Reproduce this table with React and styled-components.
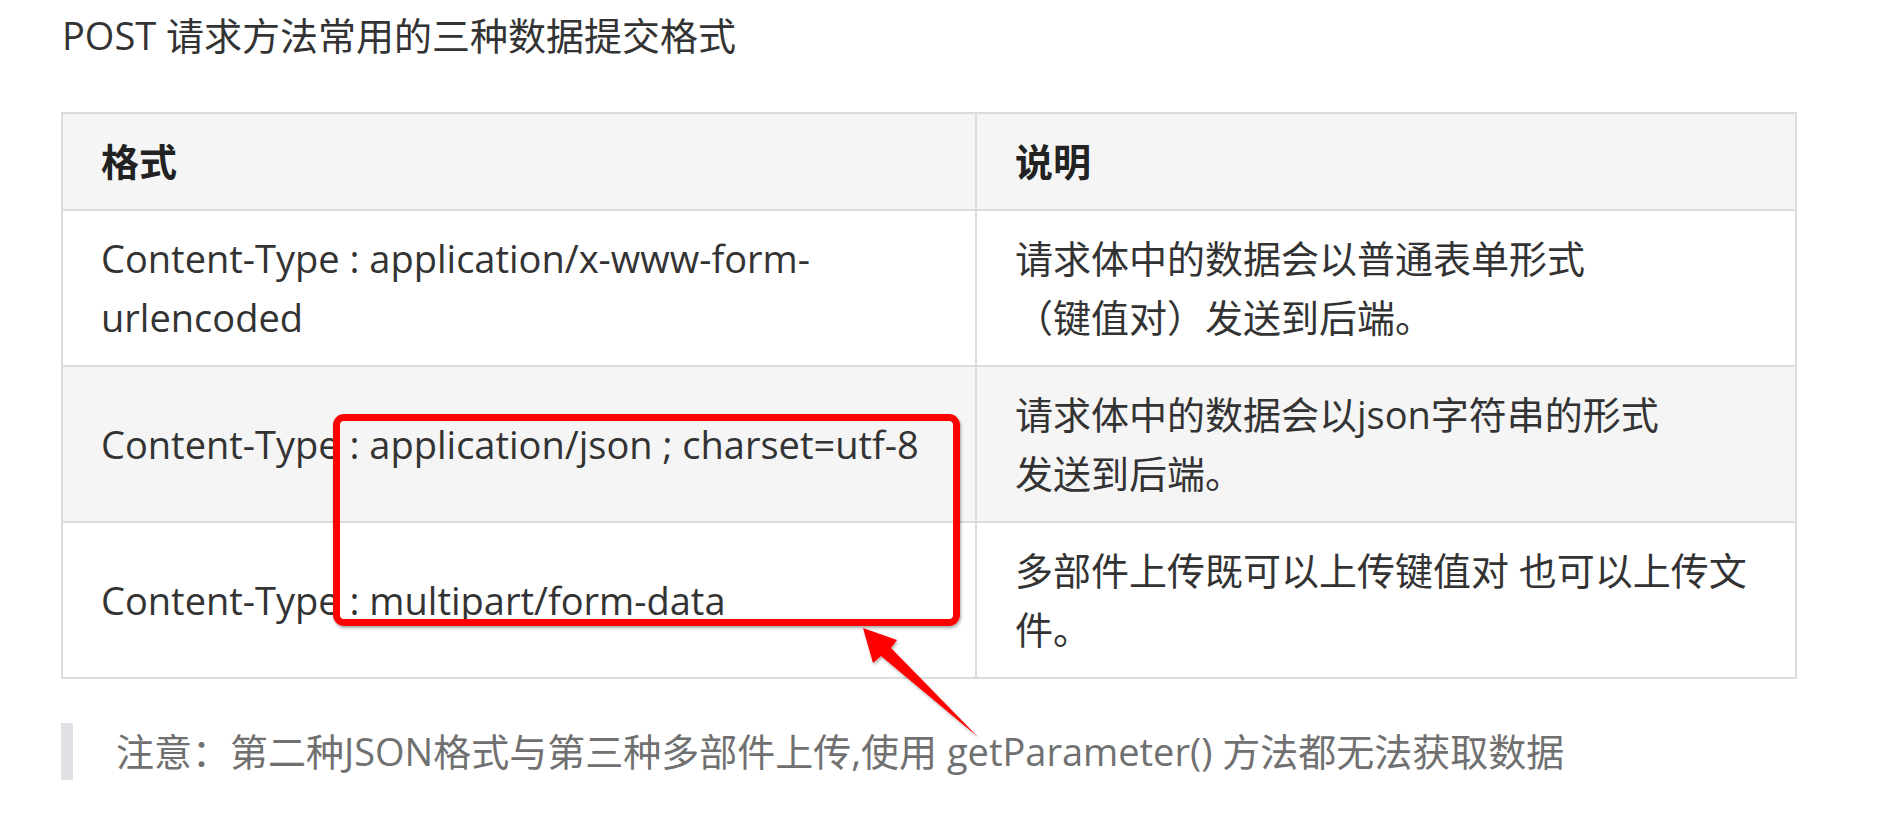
import React from "react";
import styled, { createGlobalStyle } from "styled-components";

const GlobalStyle = createGlobalStyle`
  html, body {
    margin: 0;
    padding: 0;
    background: #ffffff;
  }
  body {
    font-family: "Open Sans", "Noto Sans CJK SC", sans-serif;
    color: #333333;
  }
`;

const Page = styled.div`
  position: relative;
  width: 1888px;
  height: 816px;
  box-sizing: border-box;
  padding: 6px 0 0 61px;
  overflow: hidden;
`;

const Title = styled.p`
  margin: 0 0 47px 1px;
  font-size: 38px;
  line-height: 59px;
  color: #333333;
  font-weight: 400;
`;

const Table = styled.table`
  border-collapse: collapse;
  table-layout: fixed;
  width: 1734px;
  font-size: 38px;
  line-height: 59px;
  border: 2px solid #dcdcdc;
`;

const Col = styled.col`
  width: ${(p) => p.$w}px;
`;

const Row = styled.tr`
  background: ${(p) => (p.$shade ? "#f5f5f5" : "#ffffff")};
`;

const HeadCell = styled.th`
  text-align: left;
  font-weight: 700;
  color: #222222;
  padding: 18px 38px;
  border: 2px solid #dcdcdc;
`;

const Cell = styled.td`
  padding: 18px 38px;
  border: 2px solid #dcdcdc;
  color: #333333;
  vertical-align: middle;
`;

const Note = styled.blockquote`
  margin: 44px 0 0 0;
  padding: 0 0 0 43px;
  border-left: 12px solid #dfe1e4;
  font-size: 38px;
  line-height: 57px;
  color: #707070;
`;

const Highlight = styled.div`
  position: absolute;
  left: 333px;
  top: 414px;
  width: 627px;
  height: 212px;
  box-sizing: border-box;
  border: 7px solid #ff0000;
  border-radius: 11px;
  box-shadow: 1px 2px 3px rgba(0, 0, 0, 0.35);
  pointer-events: none;
`;

const ArrowSvg = styled.svg`
  position: absolute;
  left: 0;
  top: 0;
  width: 1888px;
  height: 816px;
  pointer-events: none;
  overflow: visible;
`;

const rows = [
  {
    format: "Content-Type : application/x-www-form-urlencoded",
    desc: ["请求体中的数据会以普通表单形式", "（键值对）发送到后端。"],
  },
  {
    format: "Content-Type : application/json ; charset=utf-8",
    desc: ["请求体中的数据会以json字符串的形式", "发送到后端。"],
  },
  {
    format: "Content-Type : multipart/form-data",
    desc: ["多部件上传既可以上传键值对 也可以上传文件。"],
  },
];

export default function App() {
  return (
    <>
      <GlobalStyle />
      <Page>
        <Title>POST 请求方法常用的三种数据提交格式</Title>
        <Table>
          <colgroup>
            <Col $w={914} />
            <Col $w={820} />
          </colgroup>
          <thead>
            <Row $shade>
              <HeadCell>格式</HeadCell>
              <HeadCell>说明</HeadCell>
            </Row>
          </thead>
          <tbody>
            {rows.map((r, i) => (
              <Row key={i} $shade={i % 2 === 1}>
                <Cell>{r.format}</Cell>
                <Cell>
                  {r.desc.map((line, j) => (
                    <React.Fragment key={j}>
                      {j > 0 && <br />}
                      {line}
                    </React.Fragment>
                  ))}
                </Cell>
              </Row>
            ))}
          </tbody>
        </Table>
        <Note>注意：第二种JSON格式与第三种多部件上传,使用 getParameter() 方法都无法获取数据</Note>
        <Highlight />
        <ArrowSvg viewBox="0 0 1888 816">
          <defs>
            <filter id="arrowShadow" x="-20%" y="-20%" width="140%" height="140%">
              <feDropShadow dx="1" dy="2" stdDeviation="1.5" floodColor="#000" floodOpacity="0.3" />
            </filter>
          </defs>
          <polygon
            points="863,628 897,640 891,648 978,737 881,656 873,663"
            fill="#ff0000"
            filter="url(#arrowShadow)"
          />
        </ArrowSvg>
      </Page>
    </>
  );
}
